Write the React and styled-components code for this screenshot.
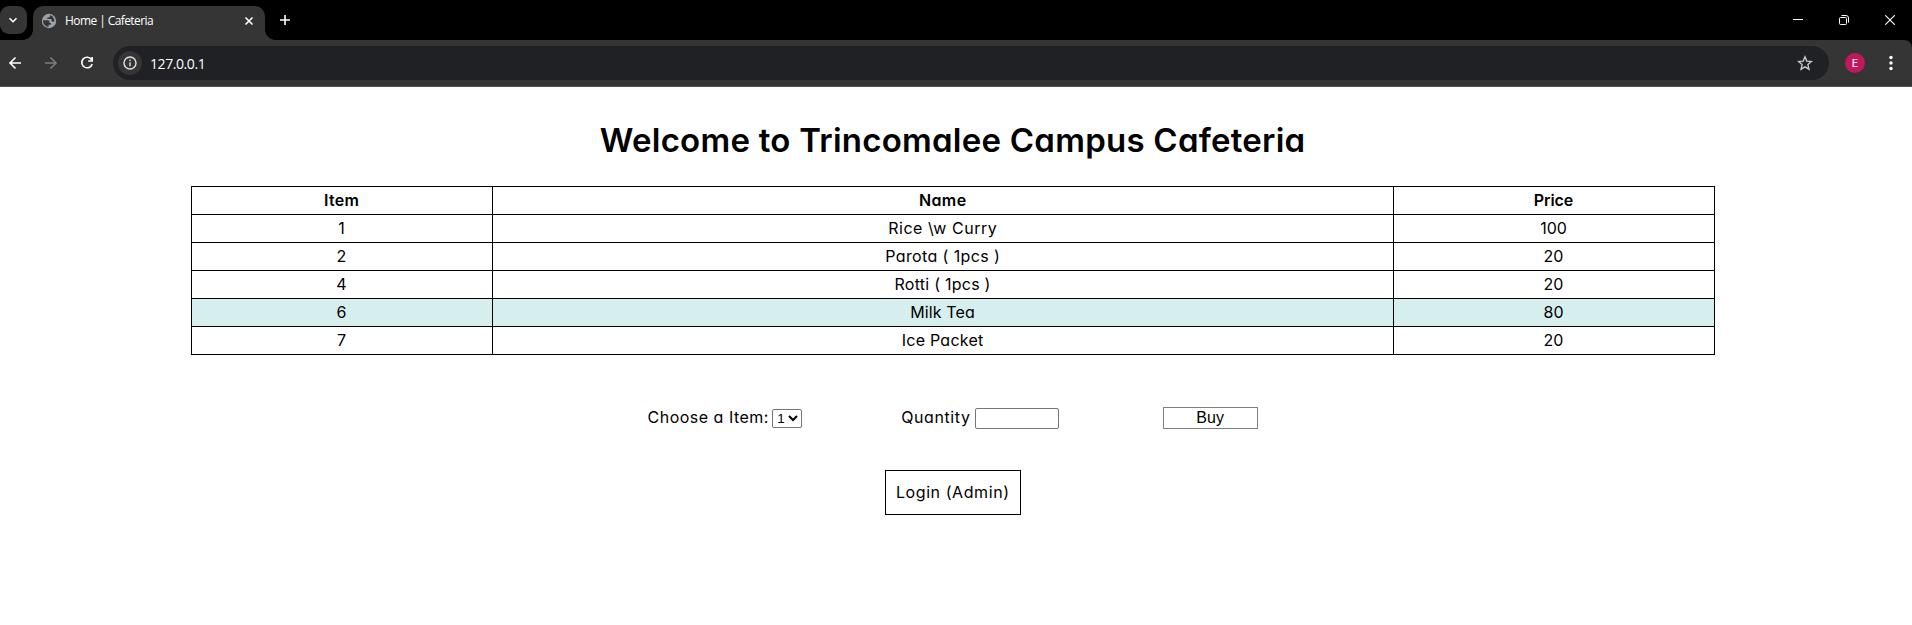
import React from "react";
import styled, { createGlobalStyle } from "styled-components";

const Global = createGlobalStyle`
  *, *::before, *::after { box-sizing: border-box; }
  html, body { margin: 0; background: #fff; overflow: hidden; }
  body { font-family: Inter, "Liberation Sans", sans-serif; font-size: 16px; color: #000; }
`;

const Window = styled.div`
  height: 625px;
  display: flex;
  flex-direction: column;
`;

const TabStrip = styled.header`
  height: 40px;
  background: #000;
  display: flex;
  align-items: flex-end;
`;

const TabSearch = styled.button`
  width: 27px;
  height: 28px;
  margin: 0 6px 6px 0;
  padding: 0 1px 0 0;
  border: 0;
  border-radius: 9px;
  background: #353535;
  display: flex;
  align-items: center;
  justify-content: center;
`;

const Tab = styled.div`
  position: relative;
  width: 232px;
  height: 34px;
  padding: 0 10px 5px 8px;
  background: #353535;
  border-radius: 10px 10px 0 0;
  display: flex;
  align-items: center;

  &::before, &::after {
    content: "";
    position: absolute;
    bottom: 0;
    width: 10px;
    height: 10px;
  }
  &::before {
    left: -10px;
    background: radial-gradient(circle at 0 0, transparent 9.5px, #353535 10px);
  }
  &::after {
    right: -10px;
    background: radial-gradient(circle at 100% 0, transparent 9.5px, #353535 10px);
  }
`;

const TabTitle = styled.span`
  flex: 1;
  margin-left: 8px;
  font: 12px "Open Sans", "Noto Sans", sans-serif;
  letter-spacing: ${(p) => p.$tracking}px;
  line-height: 16px;
  color: #fff;
  white-space: nowrap;
`;

const NewTab = styled.div`
  height: 40px;
  margin-left: 14px;
  flex: 1;
  display: flex;
  align-items: center;
`;

const WindowButtons = styled.div`
  height: 40px;
  width: 138px;
  display: grid;
  grid-template-columns: 46px 46px 46px;
  place-items: center;
  margin-right: -1px;
`;

const CornerFill = styled.div`
  background: #000;
`;

const Toolbar = styled.nav`
  height: 46px;
  background: #353535;
  border-radius: 0 8px 0 0;
  display: flex;
  align-items: center;
`;

const NavIcons = styled.div`
  width: 113px;
  display: flex;
  gap: 16px;
  padding-left: 5px;
`;

const AddressBar = styled.div`
  width: 1716px;
  height: 34px;
  padding: 0 16px 0 5px;
  border-radius: 17px;
  background: #202124;
  display: flex;
  align-items: center;
`;

const InfoChip = styled.span`
  width: 24px;
  height: 24px;
  border-radius: 50%;
  background: #353535;
  display: flex;
  align-items: center;
  justify-content: center;
`;

const Url = styled.span`
  flex: 1;
  margin-left: 8px;
  font: 14px "Open Sans", "Noto Sans", sans-serif;
  letter-spacing: ${(p) => p.$tracking}px;
  color: #fff;
`;

const Avatar = styled.span`
  width: 20px;
  height: 20px;
  margin: 0 22px 0 16px;
  border-radius: 50%;
  background: #c2185b;
  color: #fff;
  font: 11px Roboto, sans-serif;
  display: flex;
  align-items: center;
  justify-content: center;
`;

const ToolbarEdge = styled.div`
  height: 1px;
  background: #555;
`;

const Page = styled.main`
  width: 1905px;
  display: flex;
  flex-direction: column;
  align-items: center;
`;

const Phrase = styled.span`
  padding-bottom: 2px;
  font-feature-settings: "cv11";
  letter-spacing: ${(p) => p.$tracking || 0}px;
  margin-right: ${(p) => -(p.$tracking || 0)}px;
  white-space: pre;
`;

const Title = styled.h1`
  margin: 29px 0 0;
  height: 70px;
  font-size: 33px;
  line-height: 49px;
  font-weight: 600;
`;

const Table = styled.table`
  width: 1523px;
  table-layout: fixed;
  border-collapse: collapse;
  text-align: center;
`;

const Row = styled.tr`
  height: 28px;
  background: ${(p) => (p.$active ? "#d6eeee" : "transparent")};
`;

const Cell = styled.td`
  padding: 0 0 2px;
  border: 1px solid #000;
  line-height: 24px;
  font-weight: 400;
`;

const HeadCell = styled(Cell)`
  font-weight: 600;
`;

const OrderForm = styled.form`
  width: 610px;
  height: 24px;
  margin-top: 51px;
  display: flex;
  align-items: center;
`;

const Field = styled.label`
  width: ${(p) => p.$width}px;
  display: flex;
  align-items: center;
  justify-content: space-between;
  margin-right: ${(p) => p.$after}px;
`;

const ItemSelect = styled.select`
  width: 30px;
  height: 19px;
  margin-top: 1px;
  padding: 0;
  border: 1px solid #767676;
  border-radius: 2px;
  background-color: #fff;
  color: #000;
  font: 13.333px "Liberation Sans", sans-serif;
`;

const QuantityInput = styled.input`
  width: 84px;
  height: 21px;
  margin-top: 1px;
  border: 1px solid #767676;
  border-radius: 2px;
  background: #fff;
`;

const BuyButton = styled.button`
  width: 95px;
  height: 22px;
  padding: 0;
  border: 1px solid #808080;
  background: #fff;
  color: #000;
  font: 16px "Liberation Sans", sans-serif;
  line-height: 20px;
`;

const LoginLink = styled.a`
  width: 136px;
  height: 45px;
  margin-top: 40px;
  border: 1px solid #000;
  display: flex;
  align-items: center;
  justify-content: center;
`;

const Icon = ({ w = 20, h = w, color = "#fff", sw = 1.6, children }) => (
  <svg width={w} height={h} viewBox={`0 0 ${w} ${h}`} fill="none" stroke={color} strokeWidth={sw}>
    {children}
  </svg>
);

const columns = [
  { label: "Item", width: 301, tracking: 0.35 },
  { label: "Name", width: 901, tracking: 0.4 },
  { label: "Price", width: 321, tracking: -0.1 },
];

const items = [
  { id: "1", name: "Rice \\w Curry", price: "100", tracking: 0.55 },
  { id: "2", name: "Parota ( 1pcs )", price: "20", tracking: 0.38 },
  { id: "4", name: "Rotti ( 1pcs )", price: "20", tracking: 0.25 },
  { id: "6", name: "Milk Tea", price: "80", tracking: 0.1, active: true },
  { id: "7", name: "Ice Packet", price: "20", tracking: 0.25 },
];

export default function App() {
  return (
    <Window>
      <Global />
      <TabStrip>
        <TabSearch aria-label="Search tabs">
          <Icon w={10} h={8}><path d="M1.500 2.200 5 5.700 8.500 2.200" /></Icon>
        </TabSearch>
        <Tab>
          <Icon w={16} color="none">
            <circle cx="8" cy="8" r="7.2" fill="#9aa0a6" />
            <path d="M2.100 7.300H6.500a2 2 0 0 1 2 2v.8h1.300v1.600H7.500v2.200A6 6 0 0 1 2.100 7.300ZM9 2.100v.8a1.500 1.500 0 0 1-1.500 1.500H6.300v1.700h4.300v2.400h1.600a1.600 1.600 0 0 1 1 .5A6 6 0 0 0 9 2.100Z" fill="#353535" />
          </Icon>
          <TabTitle $tracking={-0.58}>Home | Cafeteria</TabTitle>
          <Icon w={12}><path d="m2.500 2.500 7 7m0-7-7 7" /></Icon>
        </Tab>
        <NewTab>
          <Icon w={12}><path d="M6 1v10M1 6h10" /></Icon>
        </NewTab>
        <WindowButtons>
          <Icon w={10} sw={1}><path d="M0 4.500h10" /></Icon>
          <Icon w={10} sw={1}>
            <rect x=".5" y="2.500" width="7" height="7" rx="1" />
            <path d="M2.500.5H7A2.500 2.500 0 0 1 9.500 3v4.500" />
          </Icon>
          <Icon w={10} sw={1.1}><path d="m.2.2 9.600 9.600m0-9.600L.2 9.800" /></Icon>
        </WindowButtons>
      </TabStrip>
      <CornerFill>
        <Toolbar>
          <NavIcons>
            <Icon><path d="M16 10H5m5.500-5.500L5 10l5.500 5.500" /></Icon>
            <Icon color="#7c7c7c"><path d="M4 10h11M9.500 4.500 15 10l-5.500 5.500" /></Icon>
            <Icon><path d="M14.500 6.500A5.300 5.300 0 1 0 15.200 11M15.200 4v4h-4" /></Icon>
          </NavIcons>
          <AddressBar>
            <InfoChip>
              <Icon w={14} color="#e3e3e3" sw={1.4}>
                <circle cx="7" cy="7" r="6" />
                <path d="M7 6.200v4M7 3.600v1.500" />
              </Icon>
            </InfoChip>
            <Url $tracking={-0.42}>127.0.0.1</Url>
            <Icon w={16} color="#c7c7c7" sw={1.4}>
              <path d="m8 1.800 1.800 4.300 4.600.4-3.500 3.100 1.050 4.600L8 11.800l-3.950 2.400L5.100 9.600 1.600 6.500l4.600-.4Z" />
            </Icon>
          </AddressBar>
          <Avatar>E</Avatar>
          <Icon w={8} h={16} color="none">
            <g fill="#fff"><circle cx="4" cy="2.500" r="1.700" /><circle cx="4" cy="8" r="1.700" /><circle cx="4" cy="13.500" r="1.700" /></g>
          </Icon>
        </Toolbar>
      </CornerFill>
      <ToolbarEdge />
      <Page>
        <Title><Phrase $tracking={0.24}>Welcome to Trincomalee Campus Cafeteria</Phrase></Title>
        <Table>
          <colgroup>
            {columns.map((c) => <col key={c.label} width={c.width} />)}
          </colgroup>
          <thead>
            <Row>
              {columns.map((c) => (
                <HeadCell as="th" key={c.label}><Phrase $tracking={c.tracking}>{c.label}</Phrase></HeadCell>
              ))}
            </Row>
          </thead>
          <tbody>
            {items.map((item) => (
              <Row key={item.id} $active={item.active}>
                <Cell><Phrase>{item.id}</Phrase></Cell>
                <Cell><Phrase $tracking={item.tracking}>{item.name}</Phrase></Cell>
                <Cell><Phrase>{item.price}</Phrase></Cell>
              </Row>
            ))}
          </tbody>
        </Table>
        <OrderForm>
          <Field $width={155} $after={99}>
            <Phrase $tracking={0.5}>Choose a Item:</Phrase>
            <ItemSelect defaultValue="1">
              {items.map((item) => <option key={item.id}>{item.id}</option>)}
            </ItemSelect>
          </Field>
          <Field $width={158} $after={104}>
            <Phrase $tracking={0.6}>Quantity</Phrase>
            <QuantityInput type="text" />
          </Field>
          <BuyButton type="button">Buy</BuyButton>
        </OrderForm>
        <LoginLink><Phrase $tracking={0.58}>Login (Admin)</Phrase></LoginLink>
      </Page>
    </Window>
  );
}
